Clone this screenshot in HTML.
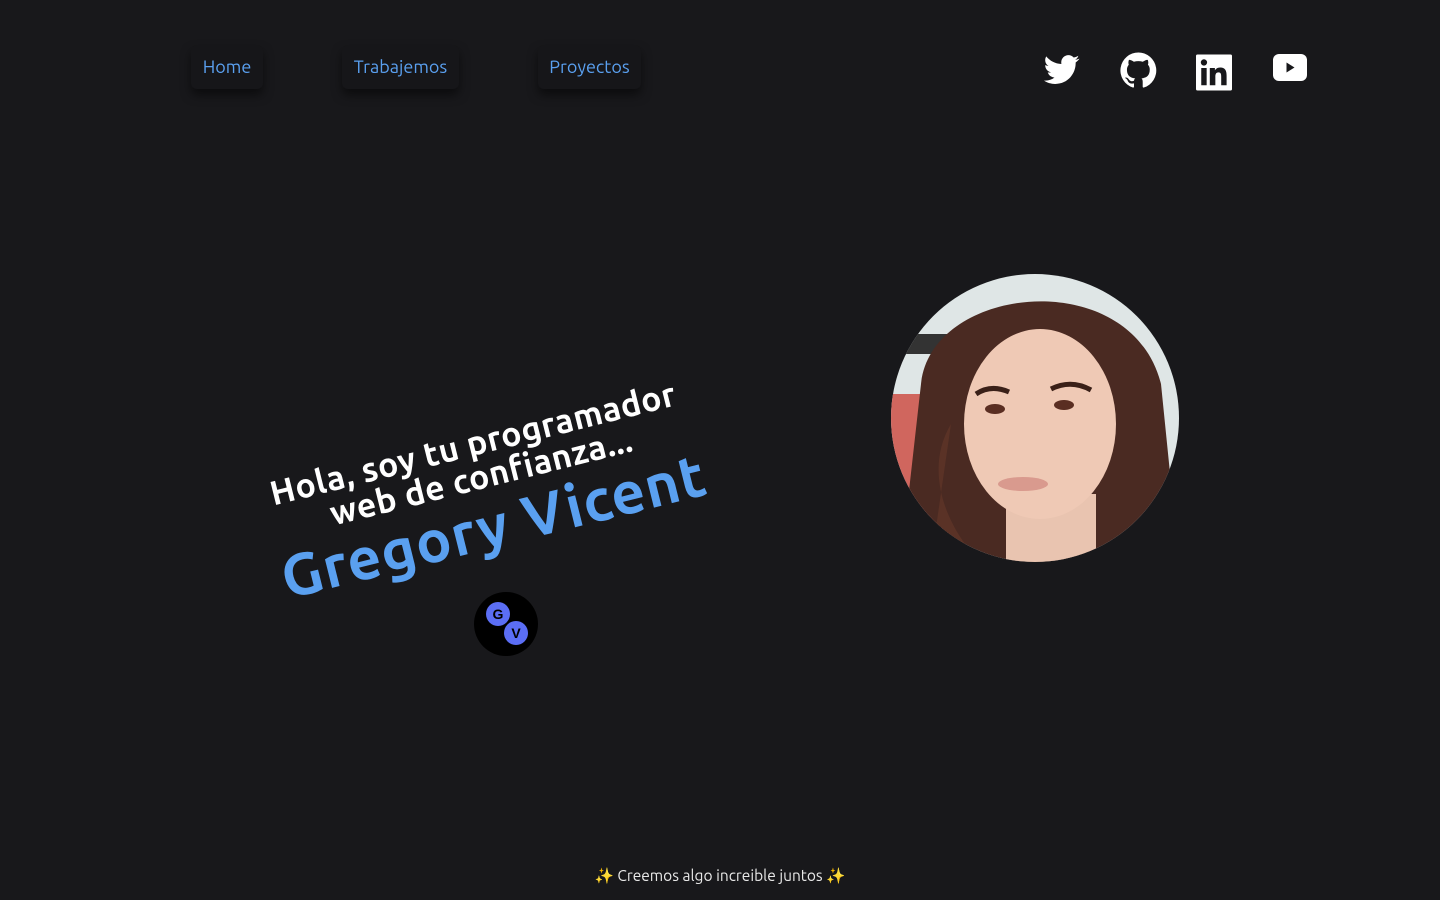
<!DOCTYPE html>
<html><head><meta charset="utf-8"><style>
*{margin:0;padding:0;box-sizing:border-box}
body{width:1440px;height:900px;background:#18181b;overflow:hidden;position:relative;font-family:"Ubuntu","Liberation Sans","DejaVu Sans",sans-serif}
.nav{position:absolute;top:45px;height:44px;background:#161619;border-radius:6px;box-shadow:0 6px 10px rgba(0,0,0,.5);color:#5aa0f0;font-size:18px;line-height:44px;text-align:center}
.soc{position:absolute}
.hero{position:absolute;left:235px;top:425px;width:500px;transform:rotate(-14deg);transform-origin:center;text-align:center;font-weight:bold}
.l1{color:#fff;font-size:34px;line-height:34px;letter-spacing:.5px}
.l2{color:#5aa0f0;font-size:59px;line-height:64px;margin-top:2px;letter-spacing:1px}
.foot{position:absolute;left:0;right:0;top:867px;text-align:center;color:#e8e8e8;font-size:15.5px}
</style></head><body>
<div class="nav" style="left:191px;width:72px">Home</div>
<div class="nav" style="left:342px;width:117px">Trabajemos</div>
<div class="nav" style="left:538px;width:103px">Proyectos</div>

<svg class="soc" style="left:1044px;top:54px" width="36" height="32" viewBox="0 0 24 20"><path fill="#fff" d="M23.6 2.4c-.9.4-1.8.6-2.800.8 1-.6 1.8-1.500 2.100-2.700-.9.6-2 1-3.1 1.2C18.9.7 17.6.1 16.3.1c-2.7 0-4.8 2.2-4.8 4.8 0 .4 0 .8.1 1.1C7.5 5.8 3.9 3.9 1.5.9c-.4.7-.7 1.6-.7 2.4 0 1.700.9 3.2 2.2 4-.8 0-1.500-.2-2.200-.6v.1c0 2.3 1.700 4.3 3.900 4.700-.4.1-.8.2-1.300.2-.3 0-.6 0-.9-.1.6 1.900 2.400 3.300 4.500 3.400-1.700 1.300-3.700 2.100-6 2.100H0c2.100 1.400 4.700 2.200 7.400 2.200 8.900 0 13.700-7.400 13.700-13.700v-.6c1-.7 1.800-1.500 2.500-2.500z"/></svg>
<svg class="soc" style="left:1120px;top:52px" width="37" height="36" viewBox="0 0 24 24"><path fill="#fff" d="M12 .3a12 12 0 0 0-3.8 23.4c.6.1.8-.3.8-.6v-2.2c-3.3.7-4-1.4-4-1.4-.6-1.4-1.4-1.8-1.4-1.8-1.1-.7.1-.7.1-.7 1.2.1 1.8 1.2 1.8 1.2 1.1 1.8 2.8 1.3 3.5 1 .1-.8.4-1.3.8-1.6-2.7-.3-5.5-1.3-5.5-5.9 0-1.3.5-2.4 1.2-3.2-.1-.3-.5-1.5.1-3.2 0 0 1-.3 3.3 1.2a11.5 11.5 0 0 1 6 0c2.3-1.5 3.3-1.2 3.3-1.2.6 1.7.2 2.9.1 3.2.8.8 1.2 1.9 1.2 3.2 0 4.6-2.8 5.6-5.5 5.9.4.4.8 1.1.8 2.2v3.3c0 .3.2.7.8.6A12 12 0 0 0 12 .3z"/></svg>
<svg class="soc" style="left:1196px;top:54px" width="36" height="37" viewBox="0 0 24 24"><rect width="24" height="24" rx="1" fill="#fff"/><rect x="3.5" y="9" width="3.6" height="11.5" fill="#18181b"/><circle cx="5.3" cy="5.3" r="2.1" fill="#18181b"/><path fill="#18181b" d="M9.2 9h3.4v1.6c.5-.9 1.7-1.9 3.5-1.9 3.6 0 4.3 2.4 4.3 5.5v6.3h-3.6v-5.6c0-1.3 0-3-1.8-3s-2.1 1.4-2.1 2.9v5.7H9.2z"/></svg>
<svg class="soc" style="left:1273px;top:54px" width="34" height="27" viewBox="0 0 34 27"><rect width="34" height="27" rx="6" fill="#fff"/><path d="M13.5 8.5l8 5-8 5z" fill="#18181b"/></svg>

<div class="hero"><div class="l1">Hola, soy tu programador<br>web de confianza...</div><div class="l2">Gregory Vicent</div></div>

<svg style="position:absolute;left:474px;top:592px" width="64" height="64" viewBox="0 0 64 64"><circle cx="32" cy="32" r="32" fill="#000"/><circle cx="24" cy="22" r="12" fill="#5b6ef5"/><circle cx="42" cy="41" r="12" fill="#5b6ef5"/><text x="24" y="27" font-size="14" font-weight="bold" text-anchor="middle" fill="#000" font-family="Liberation Sans Narrow,Liberation Sans,sans-serif">G</text><text x="42" y="46" font-size="14" font-weight="bold" text-anchor="middle" fill="#000" font-family="Liberation Sans Narrow,Liberation Sans,sans-serif">V</text></svg>

<svg style="position:absolute;left:891px;top:274px" width="288" height="288" viewBox="0 0 288 288">
<defs><clipPath id="c"><circle cx="144" cy="144" r="144"/></clipPath></defs>
<g clip-path="url(#c)">
<rect width="288" height="288" fill="#dfe6e6"/>
<rect x="0" y="60" width="80" height="20" fill="#333"/>
<rect x="0" y="120" width="60" height="140" fill="#d0665e"/>
<path d="M30 110 C40 10 240 -10 270 110 L288 288 L10 288 Z" fill="#4a2a22"/>
<path d="M60 150 C30 200 60 260 90 288 L40 288 Z" fill="#5a3226"/>
<rect x="115" y="220" width="90" height="80" fill="#e9c4b0"/>
<ellipse cx="149" cy="150" rx="76" ry="95" fill="#efc9b5"/>
<ellipse cx="104" cy="135" rx="10" ry="5" fill="#5a2e22"/>
<ellipse cx="173" cy="131" rx="10" ry="5" fill="#5a2e22"/>
<path d="M85 120 Q100 110 118 118" stroke="#3a2018" stroke-width="5" fill="none"/>
<path d="M160 115 Q180 105 200 116" stroke="#3a2018" stroke-width="5" fill="none"/>
<ellipse cx="132" cy="210" rx="25" ry="7" fill="#d99a8e"/>
</g></svg>

<div class="foot">✨ Creemos algo increible juntos ✨</div>
</body></html>
